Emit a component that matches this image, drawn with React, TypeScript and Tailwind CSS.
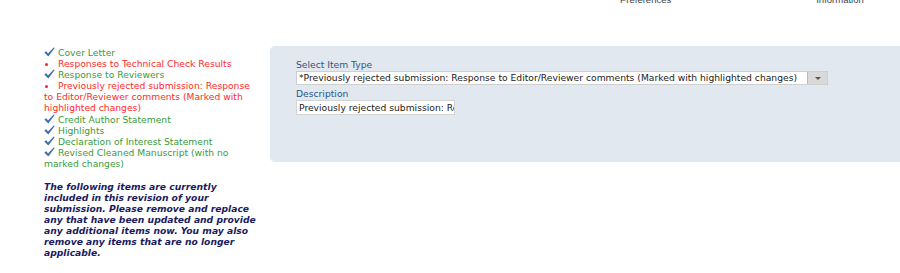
import React from "react";

// checklist items: ok = already attached (green tick), otherwise missing (red bullet)
const items = [
  { label: "Cover Letter", ok: true },
  { label: "Responses to Technical Check Results", ok: false },
  { label: "Response to Reviewers", ok: true },
  {
    label:
      "Previously rejected submission: Response to Editor/Reviewer comments (Marked with highlighted changes)",
    ok: false,
  },
  { label: "Credit Author Statement", ok: true },
  { label: "Highlights", ok: true },
  { label: "Declaration of Interest Statement", ok: true },
  { label: "Revised Cleaned Manuscript (with no marked changes)", ok: true },
];

function Tick() {
  return (
    <svg
      width="11"
      height="10"
      viewBox="0 0 11 10"
      className="inline-block align-[-1px] mr-[3px]"
    >
      <path d="M0.3 5.4 L2.3 4.2 L4 6.4 L9.7 0.4 L10.7 1.1 L4.3 9.6 Z" fill="#3d6ea8" />
    </svg>
  );
}

function Bullet() {
  return (
    <span className="inline-block w-[14px] align-middle">
      <span className="block w-[3px] h-[3px] ml-[1px] rounded-full bg-[#ff2020]" />
    </span>
  );
}

export default function App() {
  return (
    <div className="w-[900px] h-[273px] overflow-hidden bg-white font-['DejaVu_Sans',Verdana,sans-serif]">
      {/* top menu, mostly scrolled off */}
      <div className="h-[46px] overflow-hidden">
        <div className="flex -mt-[6px] text-[9.5px] leading-[11px] text-[#444] font-['Liberation_Sans',Arial,sans-serif]">
          <span className="ml-[620px]">Preferences</span>
          <span className="ml-[145px]">Information</span>
        </div>
      </div>

      <div className="flex">
        {/* checklist */}
        <div className="w-[258px] pl-[44px] shrink-0">
          <ul className="pt-[1px] text-[9.2px] leading-[11.1px]">
            {items.map((it) => (
              <li
                key={it.label}
                className={it.ok ? "text-[#3a9a3a]" : "text-[#ff2a2a]"}
              >
                {it.ok ? <Tick /> : <Bullet />}
                {it.label}
              </li>
            ))}
          </ul>
          <p className="mt-[12px] text-[9.2px] leading-[11px] font-bold italic text-[#1b1b5e]">
            The following items are currently included in this revision of your
            submission. Please remove and replace any that have been updated and
            provide any additional items now. You may also remove any items that
            are no longer applicable.
          </p>
        </div>

        {/* item form */}
        <div className="ml-[12px] grow h-[116px] rounded-l-[5px] bg-[#e1e8f0] pl-[26px] pt-[13px] text-[9.2px]">
          <div className="leading-[12px] text-[#2f5585]">Select Item Type</div>
          <div className="flex w-[532px] h-[14px] border border-[#cfcfcf] bg-white">
            <span className="grow pl-[2px] leading-[12px] text-[#222] whitespace-nowrap overflow-hidden">
              *Previously rejected submission: Response to Editor/Reviewer comments (Marked with highlighted changes)
            </span>
            <span className="w-[20px] flex items-center justify-center bg-[#d9d9d9] border-l border-[#bbb]">
              <span className="border-x-[3px] border-x-transparent border-t-[3px] border-t-[#555]" />
            </span>
          </div>
          <div className="mt-[3px] leading-[12px] text-[#2f5585]">Description</div>
          <div className="w-[159px] h-[15px] border border-[#d4d4d4] bg-white pl-[2px] leading-[13px] text-[#222] whitespace-nowrap overflow-hidden">
            Previously rejected submission: Response to Editor/Reviewer comments
          </div>
        </div>
      </div>
    </div>
  );
}
